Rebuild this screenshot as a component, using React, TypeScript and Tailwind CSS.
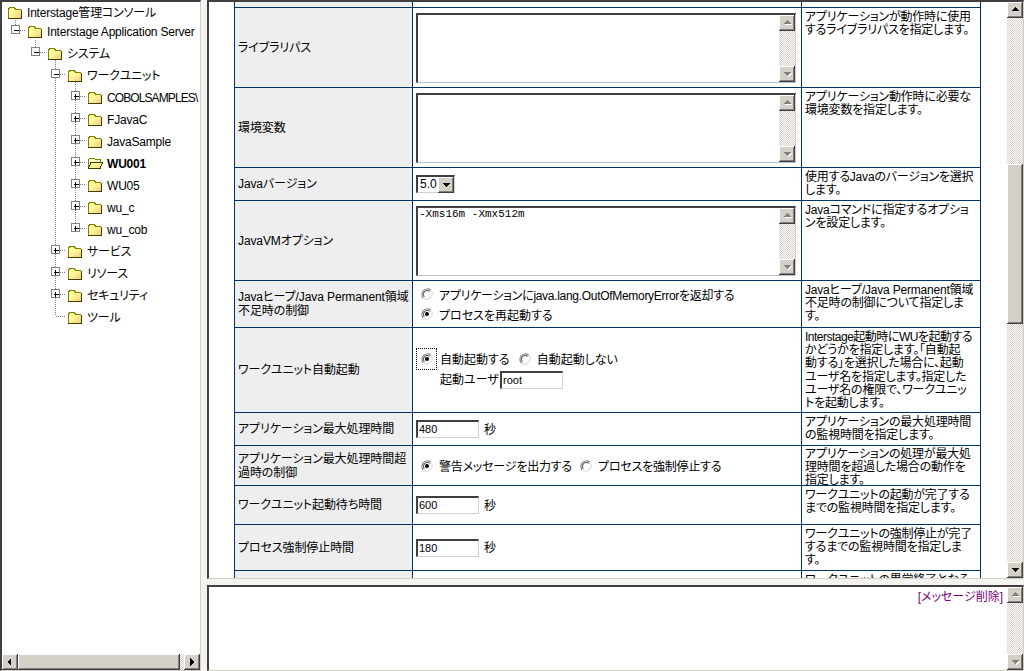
import React from 'react';

const FONT = 'font-["Liberation_Sans","Noto_Sans_CJK_JP",sans-serif] [font-feature-settings:"palt"]';

function Arrow({ dir, disabled }: { dir: 'up' | 'down' | 'left' | 'right'; disabled?: boolean }) {
  const points = {
    up: '8,5 4,9 12,9',
    down: '4,6 12,6 8,10',
    left: '9,4 9,12 5,8',
    right: '6,4 6,12 10,8',
  }[dir];
  return (
    <svg width="16" height="16" shapeRendering="crispEdges">
      {disabled && <polygon points={points} fill="#ffffff" transform="translate(1,1)" />}
      <polygon points={points} fill={disabled ? '#808080' : '#000000'} />
    </svg>
  );
}

function ScrollBtn({ dir, disabled }: { dir: 'up' | 'down' | 'left' | 'right'; disabled?: boolean }) {
  return (
    <div className="w-[16px] h-[16px] shrink-0 bg-[#d4d0c8] shadow-[inset_-1px_-1px_0_#404040,inset_1px_1px_0_#ffffff,inset_-2px_-2px_0_#808080]">
      <Arrow dir={dir} disabled={disabled} />
    </div>
  );
}

const TRACK = '[background:repeating-conic-gradient(#d4d0c8_0_25%,#ffffff_0_50%)_0_0/2px_2px]';
const THUMB = 'bg-[#d4d0c8] shadow-[inset_-1px_-1px_0_#404040,inset_1px_1px_0_#ffffff,inset_-2px_-2px_0_#808080]';

function Folder({ open }: { open?: boolean }) {
  return (
    <svg width="16" height="13" className="shrink-0" shapeRendering="crispEdges">
      <defs>
        <linearGradient id="fold" x1="0" y1="0" x2="1" y2="1">
          <stop offset="0.4" stopColor="#ffff99" />
          <stop offset="1" stopColor="#f0c888" />
        </linearGradient>
      </defs>
      {open ? (
        <>
          <path d="M1.5 11.5V2.5L3 1H7L8.5 2.5H13.5V5" fill="#ffffcc" stroke="#808000" />
          <path d="M1.5 11.5L4 5.5H15.5L13 11.5Z" fill="url(#fold)" stroke="#404000" />
        </>
      ) : (
        <>
          <path d="M1 3L3 1H7L9 3H14V12H1Z" fill="url(#fold)" />
          <path d="M1.5 12V3L3 1.5H7L9 3.5H14" fill="none" stroke="#808000" />
          <path d="M1 12.5H15M14.5 4V12.5" stroke="#404000" fill="none" />
        </>
      )}
    </svg>
  );
}

function Row({ depth, h, bold, open, tight, children }: { depth: number; h: string; bold?: boolean; open?: boolean; tight?: boolean; children: React.ReactNode }) {
  return (
    <div className={`relative flex items-center whitespace-nowrap text-[12px] text-black ${h}`} style={{ paddingLeft: 5 + depth * 20 }}>
      <Folder open={open} />
      <span className={`ml-[4px] mt-[1px] ${tight ? 'tracking-[-0.9px]' : 'tracking-[-0.2px]'} ${bold ? 'font-bold' : ''}`}>{children}</span>
    </div>
  );
}

function Connectors() {
  const boxes: [number, number, boolean][] = [
    [15, 30, false], [35, 52, false], [55, 74, false],
    [75, 96, true], [75, 118, true], [75, 140, true], [75, 162, true], [75, 184, true], [75, 206, true], [75, 228, true],
    [55, 250, true], [55, 272, true], [55, 294, true],
  ];
  return (
    <svg className="absolute left-[-2px] top-[-2px]" width="200" height="330" shapeRendering="crispEdges">
      <g stroke="#808080" strokeDasharray="1 1" fill="none">
        <path d="M15.5 20V26M35.5 40V48M55.5 60V316M75.5 82V228M55.5 316.5H66" />
        {boxes.map(([x, y]) => <path key={`${x}-${y}`} d={`M${x + 5} ${y + 0.5}H${x + 11}`} />)}
      </g>
      {boxes.map(([x, y, plus]) => (
        <g key={`b${x}-${y}`}>
          <rect x={x - 3.5} y={y - 4.5} width="8" height="8" fill="#ffffff" stroke="#808080" />
          <path d={`M${x - 1} ${y + 0.5}H${x + 4}`} stroke="#000000" />
          {plus && <path d={`M${x + 0.5} ${y - 2}V${y + 3}`} stroke="#000000" />}
        </g>
      ))}
    </svg>
  );
}

function TextArea({ value }: { value?: string }) {
  return (
    <div className="flex w-[380px] h-[70px] bg-white border-t-2 border-l-2 border-t-[#404040] border-l-[#404040] border-r border-b border-r-[#d4d0c8] border-b-[#bdbdbd]">
      <div className="flex-1 text-[11px] leading-[13px] pl-[1px] [font-family:'Liberation_Mono',monospace]">{value}</div>
      <div className={`w-[16px] flex flex-col justify-between ${TRACK}`}>
        <ScrollBtn dir="up" disabled />
        <ScrollBtn dir="down" disabled />
      </div>
    </div>
  );
}

function TextInput({ value }: { value: string }) {
  return (
    <div className="w-[63px] h-[18px] bg-white border-t-2 border-l-2 border-t-[#404040] border-l-[#404040] border-r border-b border-r-[#d4d0c8] border-b-[#d4d0c8] text-[11px] leading-[14px] pl-[1px] [font-family:'Liberation_Sans',sans-serif]">
      {value}
    </div>
  );
}

function Radio({ checked }: { checked?: boolean }) {
  return (
    <svg width="12" height="12" className="shrink-0">
      <circle cx="6" cy="6" r="5.5" fill="#ffffff" />
      <path d="M2.2 9.8A5.4 5.4 0 0 1 9.8 2.2" fill="none" stroke="#808080" strokeWidth="1.2" />
      <path d="M3.2 8.8A4 4 0 0 1 8.8 3.2" fill="none" stroke="#404040" strokeWidth="1" />
      <path d="M9.8 2.2A5.4 5.4 0 0 1 2.2 9.8" fill="none" stroke="#d4d0c8" strokeWidth="1" />
      {checked && <circle cx="6" cy="6" r="2" fill="#000000" />}
    </svg>
  );
}

function Label({ children }: { children: React.ReactNode }) {
  return <td className="border border-[#003366] bg-[#eeeeee] pl-[3px] pr-0 text-[12px] leading-[14px] align-middle whitespace-nowrap overflow-hidden tracking-[-0.1px]">{children}</td>;
}

function Ctl({ children }: { children?: React.ReactNode }) {
  return <td className="border border-[#003366] pl-[3px] align-middle text-[12px] overflow-hidden">{children}</td>;
}

function Desc({ children }: { children?: React.ReactNode }) {
  return (
    <td className="border border-[#003366] pl-[3px] pt-[3px] align-top text-[12px] leading-[13.2px] whitespace-nowrap overflow-hidden tracking-[-0.2px]">
      <div className="-mb-[6px]">{children}</div>
    </td>
  );
}

function Seconds({ value }: { value: string }) {
  return (
    <div className="flex items-center">
      <TextInput value={value} />
      <span className="ml-[5px] mt-[1px]">秒</span>
    </div>
  );
}

export default function App() {
  return (
    <div className={`flex w-[1024px] h-[671px] overflow-hidden bg-[#f4f3ef] ${FONT}`}>
      {/* tree frame */}
      <div className="w-[201px] h-[671px] shrink-0 flex flex-col bg-white border-t-2 border-l-2 border-t-[#404040] border-l-[#404040] border-r border-b border-r-[#d4d0c8] border-b-[#d4d0c8]">
        <div className="relative flex-1 overflow-hidden">
          <Connectors />
          <Row depth={0} h="h-[20px]">Interstage管理コンソール</Row>
          <Row depth={1} h="h-[18px]">Interstage Application Server</Row>
          <div className="h-[2px]" />
          <Row depth={2} h="h-[22px]">システム</Row>
          <Row depth={3} h="h-[22px]">ワークユニット</Row>
          <Row depth={4} h="h-[22px]" tight>COBOLSAMPLES\</Row>
          <Row depth={4} h="h-[22px]">FJavaC</Row>
          <Row depth={4} h="h-[22px]">JavaSample</Row>
          <Row depth={4} h="h-[22px]" bold open>WU001</Row>
          <Row depth={4} h="h-[22px]">WU05</Row>
          <Row depth={4} h="h-[22px]">wu_c</Row>
          <Row depth={4} h="h-[22px]">wu_cob</Row>
          <Row depth={3} h="h-[22px]">サービス</Row>
          <Row depth={3} h="h-[22px]">リソース</Row>
          <Row depth={3} h="h-[22px]">セキュリティ</Row>
          <Row depth={3} h="h-[22px]">ツール</Row>
        </div>
        <div className="flex h-[16px] shrink-0">
          <ScrollBtn dir="left" />
          <div className={`w-[162px] ${THUMB}`} />
          <div className={`flex-1 ${TRACK}`} />
          <ScrollBtn dir="right" />
        </div>
      </div>

      <div className="flex-1 ml-[6px] flex flex-col min-w-0">
        {/* main frame */}
        <div className="h-[579px] flex bg-white border-t-2 border-l-2 border-t-[#404040] border-l-[#404040] border-r border-b border-r-[#d4d0c8] border-b-[#d4d0c8]">
          <div className="flex-1 overflow-hidden pl-[25px] min-w-0">
            <table className="table-fixed border-collapse w-[746px] -mt-[10px] text-black">
              <colgroup>
                <col className="w-[178px]" />
                <col className="w-[389px]" />
                <col className="w-[179px]" />
              </colgroup>
              <tbody>
                <tr className="h-[15px]"><Label> </Label><Ctl /><Desc /></tr>
                <tr className="h-[80px]">
                  <Label>ライブラリパス</Label>
                  <Ctl><TextArea /></Ctl>
                  <Desc>アプリケーションが動作時に使用<br />するライブラリパスを指定します。</Desc>
                </tr>
                <tr className="h-[80px]">
                  <Label>環境変数</Label>
                  <Ctl><TextArea /></Ctl>
                  <Desc>アプリケーション動作時に必要な<br />環境変数を指定します。</Desc>
                </tr>
                <tr className="h-[33px]">
                  <Label>Javaバージョン</Label>
                  <Ctl>
                    <div className="flex w-[39px] h-[18px] bg-white border-t-2 border-l-2 border-t-[#404040] border-l-[#404040] border-r border-b border-r-[#d4d0c8] border-b-[#d4d0c8]">
                      <span className="flex-1 text-[12px] leading-[14px] pl-[2px]">5.0</span>
                      <ScrollBtn dir="down" />
                    </div>
                  </Ctl>
                  <Desc>使用するJavaのバージョンを選択<br />します。</Desc>
                </tr>
                <tr className="h-[80px]">
                  <Label>JavaVMオプション</Label>
                  <Ctl><TextArea value="-Xms16m -Xmx512m" /></Ctl>
                  <Desc>Javaコマンドに指定するオプショ<br />ンを設定します。</Desc>
                </tr>
                <tr className="h-[47px]">
                  <Label>Javaヒープ/Java Permanent領域<br />不足時の制御</Label>
                  <Ctl>
                    <div className="flex items-center h-[20px] pl-[5px] gap-[6px]"><Radio /><span className="mt-[3px] tracking-[-0.3px]">アプリケーションにjava.lang.OutOfMemoryErrorを返却する</span></div>
                    <div className="flex items-center h-[20px] pl-[5px] gap-[6px]"><Radio checked /><span className="mt-[3px]">プロセスを再起動する</span></div>
                  </Ctl>
                  <Desc>Javaヒープ/Java Permanent領域<br />不足時の制御について指定しま<br />す。</Desc>
                </tr>
                <tr className="h-[85px]">
                  <Label>ワークユニット自動起動</Label>
                  <Ctl>
                    <div className="flex items-center">
                      <div className="flex items-center justify-center w-[21px] h-[22px] border border-dotted border-black"><Radio checked /></div>
                      <span className="ml-[3px] mt-[2px]">自動起動する</span>
                      <span className="ml-[9px]"><Radio /></span>
                      <span className="ml-[6px] mt-[2px]">自動起動しない</span>
                    </div>
                    <div className="flex items-center pl-[24px] h-[18px] mt-[1px] mb-[3px]">
                      <span className="w-[60px]">起動ユーザ</span>
                      <TextInput value="root" />
                    </div>
                  </Ctl>
                  <Desc>
                    <span className="tracking-[-0.5px]">Interstage起動時にWUを起動する</span><br />かどうかを指定します。「自動起<br />動する」を選択した場合に、起動<br />ユーザ名を指定します。指定した<br />ユーザ名の権限で、ワークユニッ<br />トを起動します。
                  </Desc>
                </tr>
                <tr className="h-[33px]">
                  <Label>アプリケーション最大処理時間</Label>
                  <Ctl><Seconds value="480" /></Ctl>
                  <Desc>アプリケーションの最大処理時間<br />の監視時間を指定します。</Desc>
                </tr>
                <tr className="h-[40px]">
                  <Label>アプリケーション最大処理時間超<br />過時の制御</Label>
                  <Ctl>
                    <div className="flex items-center pl-[5px]">
                      <Radio checked />
                      <span className="ml-[6px] mt-[3px] tracking-[-0.2px]">警告メッセージを出力する</span>
                      <span className="ml-[8px]"><Radio /></span>
                      <span className="ml-[6px] mt-[3px] tracking-[-0.2px]">プロセスを強制停止する</span>
                    </div>
                  </Ctl>
                  <Desc><div className="-mt-[1px] leading-[13px]">アプリケーションの処理が最大処<br />理時間を超過した場合の動作を<br />指定します。</div></Desc>
                </tr>
                <tr className="h-[39px]">
                  <Label>ワークユニット起動待ち時間</Label>
                  <Ctl><Seconds value="600" /></Ctl>
                  <Desc>ワークユニットの起動が完了する<br />までの監視時間を指定します。</Desc>
                </tr>
                <tr className="h-[46px]">
                  <Label>プロセス強制停止時間</Label>
                  <Ctl><Seconds value="180" /></Ctl>
                  <Desc>ワークユニットの強制停止が完了<br />するまでの監視時間を指定しま<br />す。</Desc>
                </tr>
                <tr className="h-[40px]">
                  <Label> </Label>
                  <Ctl />
                  <Desc>ワークユニットの異常終了となる</Desc>
                </tr>
              </tbody>
            </table>
          </div>
          <div className={`w-[16px] shrink-0 flex flex-col ${TRACK}`}>
            <ScrollBtn dir="up" />
            <div className="h-[146px]" />
            <div className={`h-[160px] ${THUMB}`} />
            <div className="flex-1" />
            <ScrollBtn dir="down" />
          </div>
        </div>

        <div className="h-[6px] shrink-0" />

        {/* message frame */}
        <div className="flex-1 flex bg-white border-t-2 border-l-2 border-t-[#404040] border-l-[#404040] border-r border-b border-r-[#d4d0c8] border-b-[#d4d0c8]">
          <div className="flex-1 text-right text-[12px] leading-[14px] pt-[3px] pr-[4px] text-[#800080]">[メッセージ削除]</div>
          <div className={`w-[16px] shrink-0 flex flex-col justify-between ${TRACK}`}>
            <ScrollBtn dir="up" disabled />
            <ScrollBtn dir="down" disabled />
          </div>
        </div>
      </div>
    </div>
  );
}
